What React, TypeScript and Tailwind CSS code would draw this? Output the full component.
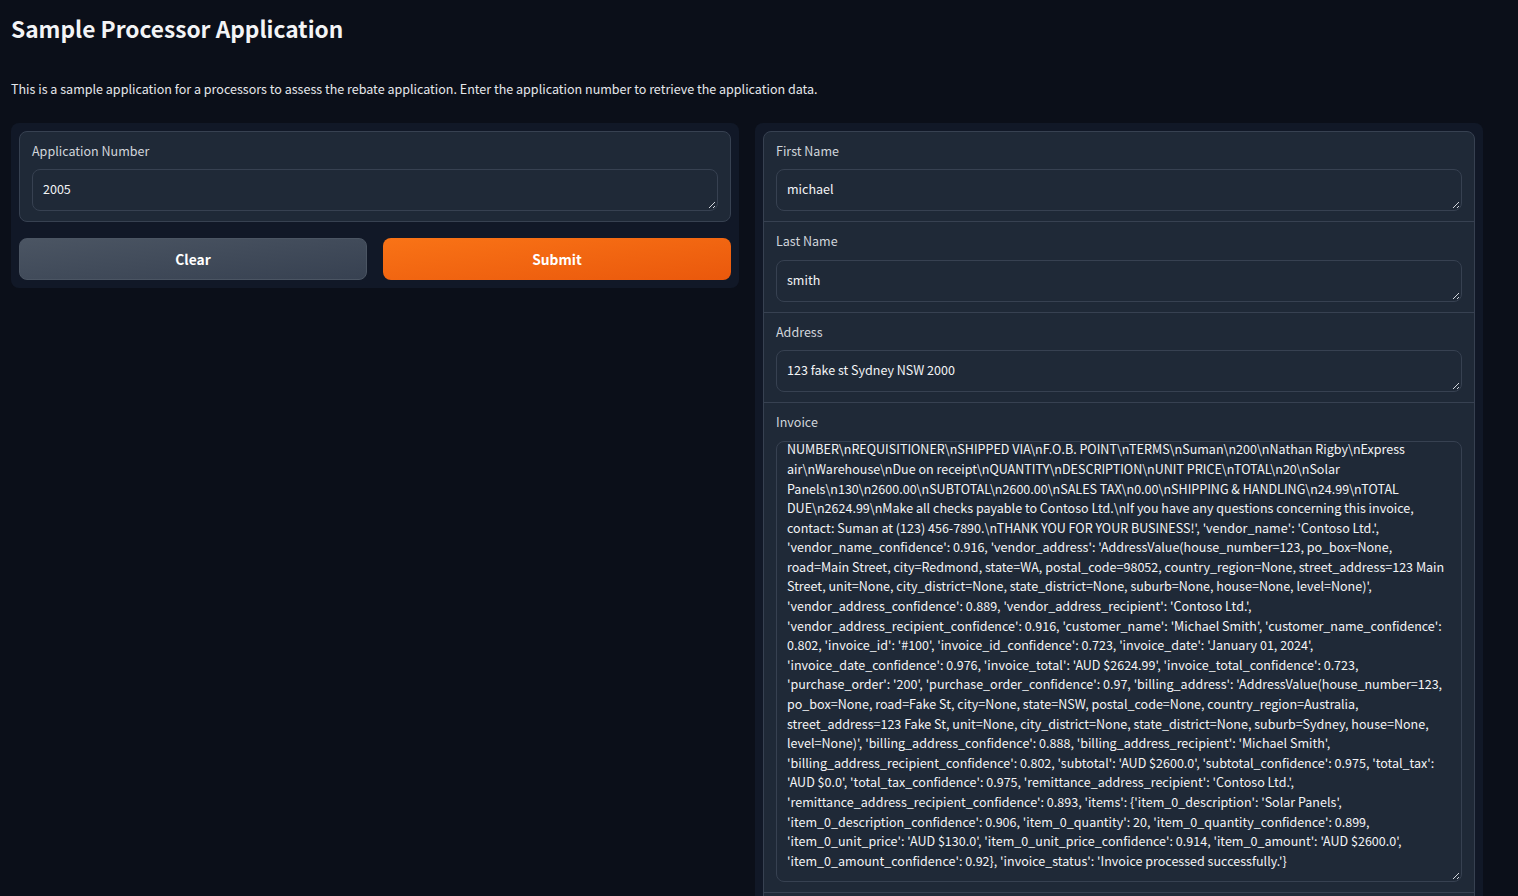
import React from 'react';

const invoiceLines = [
  "NUMBER\\nREQUISITIONER\\nSHIPPED VIA\\nF.O.B. POINT\\nTERMS\\nSuman\\n200\\nNathan Rigby\\nExpress",
  "air\\nWarehouse\\nDue on receipt\\nQUANTITY\\nDESCRIPTION\\nUNIT PRICE\\nTOTAL\\n20\\nSolar",
  "Panels\\n130\\n2600.00\\nSUBTOTAL\\n2600.00\\nSALES TAX\\n0.00\\nSHIPPING & HANDLING\\n24.99\\nTOTAL",
  "DUE\\n2624.99\\nMake all checks payable to Contoso Ltd.\\nIf you have any questions concerning this invoice,",
  "contact: Suman at (123) 456-7890.\\nTHANK YOU FOR YOUR BUSINESS!', 'vendor_name': 'Contoso Ltd.',",
  "'vendor_name_confidence': 0.916, 'vendor_address': 'AddressValue(house_number=123, po_box=None,",
  "road=Main Street, city=Redmond, state=WA, postal_code=98052, country_region=None, street_address=123 Main",
  "Street, unit=None, city_district=None, state_district=None, suburb=None, house=None, level=None)',",
  "'vendor_address_confidence': 0.889, 'vendor_address_recipient': 'Contoso Ltd.',",
  "'vendor_address_recipient_confidence': 0.916, 'customer_name': 'Michael Smith', 'customer_name_confidence':",
  "0.802, 'invoice_id': '#100', 'invoice_id_confidence': 0.723, 'invoice_date': 'January 01, 2024',",
  "'invoice_date_confidence': 0.976, 'invoice_total': 'AUD $2624.99', 'invoice_total_confidence': 0.723,",
  "'purchase_order': '200', 'purchase_order_confidence': 0.97, 'billing_address': 'AddressValue(house_number=123,",
  "po_box=None, road=Fake St, city=None, state=NSW, postal_code=None, country_region=Australia,",
  "street_address=123 Fake St, unit=None, city_district=None, state_district=None, suburb=Sydney, house=None,",
  "level=None)', 'billing_address_confidence': 0.888, 'billing_address_recipient': 'Michael Smith',",
  "'billing_address_recipient_confidence': 0.802, 'subtotal': 'AUD $2600.0', 'subtotal_confidence': 0.975, 'total_tax':",
  "'AUD $0.0', 'total_tax_confidence': 0.975, 'remittance_address_recipient': 'Contoso Ltd.',",
  "'remittance_address_recipient_confidence': 0.893, 'items': {'item_0_description': 'Solar Panels',",
  "'item_0_description_confidence': 0.906, 'item_0_quantity': 20, 'item_0_quantity_confidence': 0.899,",
  "'item_0_unit_price': 'AUD $130.0', 'item_0_unit_price_confidence': 0.914, 'item_0_amount': 'AUD $2600.0',",
  "'item_0_amount_confidence': 0.92}, 'invoice_status': 'Invoice processed successfully.'}",
];

function ResizeGrip() {
  return (
    <svg className="absolute right-[1px] bottom-[1px]" width="8" height="8" viewBox="0 0 8 8">
      <path d="M1 7 L7 1 M5 7 L7 5" stroke="#d1d5db" strokeWidth="1" fill="none" />
    </svg>
  );
}

function Field({ label, value }: { label: string; value: string }) {
  return (
    <div className="px-3 pt-2.5 pb-[10.1px]">
      <div className="mb-[9.3px] text-[12.54px] leading-[18px] text-[#d1d5db]">{label}</div>
      <div className="relative h-[42px] rounded-lg border border-[#374151] bg-[#1f2937] px-2.5 pt-[9px] text-[12.54px] leading-[19.6px] text-[#f3f4f6]">
        {value}
        <ResizeGrip />
      </div>
    </div>
  );
}

export default function App() {
  return (
    <div className="h-[896px] overflow-hidden bg-[#0b0f19] pl-[11px] font-['Noto_Sans_CJK_SC',sans-serif] text-[#f3f4f6]">
      <h1 className="pt-[13px] text-[22.7px] leading-[32px] font-semibold">Sample Processor Application</h1>
      <p className="mt-[34px] text-[12.54px] leading-[20px] text-[#e5e7eb]">
        This is a sample application for a processors to assess the rebate application. Enter the application number to retrieve the application data.
      </p>
      <div className="mt-[24px] grid w-[1472px] grid-cols-2 items-start gap-4">
        <div className="rounded-lg bg-[#111827] p-2">
          <div className="rounded-lg border border-[#374151] bg-[#1f2937]">
            <Field label="Application Number" value="2005" />
          </div>
          <div className="mt-4 grid grid-cols-2 gap-4">
            <button className="h-[42px] rounded-lg border border-[#4b5563] bg-gradient-to-br from-[#4b5563] to-[#374151] text-[13.8px] font-semibold text-white">
              Clear
            </button>
            <button className="h-[42px] rounded-lg bg-gradient-to-br from-[#f97316] to-[#ea580c] text-[13.8px] font-semibold text-white">
              Submit
            </button>
          </div>
        </div>
        <div className="rounded-lg bg-[#111827] p-2">
          <div className="divide-y divide-[#374151] rounded-lg border border-[#374151] bg-[#1f2937]">
            <Field label="First Name" value="michael" />
            <Field label="Last Name" value="smith" />
            <Field label="Address" value="123 fake st Sydney NSW 2000" />
            <div className="px-3 pt-2.5 pb-[10.1px]">
              <div className="mb-[9.9px] text-[12.54px] leading-[18px] text-[#d1d5db]">Invoice</div>
              <div className="relative flex h-[441px] flex-col justify-end overflow-hidden rounded-lg border border-[#374151] bg-[#1f2937] px-2.5 pb-[10.7px] text-[12.54px] leading-[19.6px] text-[#f3f4f6]">
                {invoiceLines.map((line, i) => (
                  <div key={i} className="shrink-0 whitespace-nowrap">{line}</div>
                ))}
                <ResizeGrip />
              </div>
            </div>
            <div className="h-40" />
          </div>
        </div>
      </div>
    </div>
  );
}
